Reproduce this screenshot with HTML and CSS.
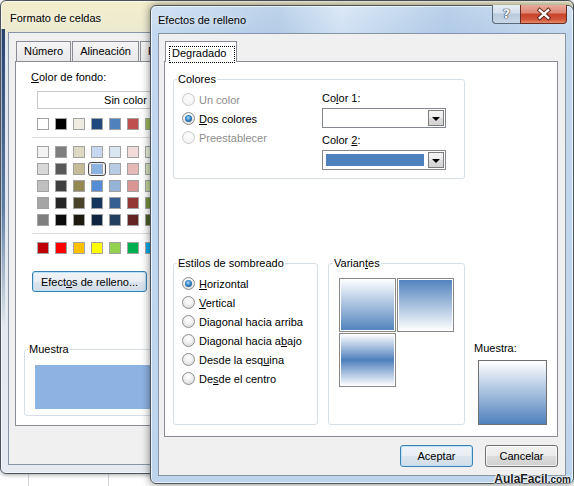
FILE: index.html
```html
<!DOCTYPE html>
<html lang="es">
<head>
<meta charset="utf-8">
<title>Efectos de relleno</title>
<link rel="stylesheet" href="styles.css">
</head>
<body>
<section class="win win-back">
  <header class="titlebar"><span class="title">Formato de celdas</span></header>
  <div class="client">
    <div class="tabstrip">
      <span class="tab">Número</span>
      <span class="tab">Alineación</span>
      <span class="tab tab-hidden">F</span>
    </div>
    <div class="panel panel-back">
      <div class="bg-label"><u>C</u>olor de fondo:</div>
      <div class="nocolor">Sin color</div>
      <div class="swatches">
        <span class="sw" style="background:#FFFFFF"></span><span class="sw" style="background:#000000"></span><span class="sw" style="background:#EEECE1"></span><span class="sw" style="background:#1F497D"></span><span class="sw" style="background:#4F81BD"></span><span class="sw" style="background:#C0504D"></span><span class="sw" style="background:#9BBB59"></span><span class="sw" style="background:#8064A2"></span><span class="sw" style="background:#4BACC6"></span><span class="sw" style="background:#F79646"></span>
      </div>
      <div class="sep"></div>
      <div class="swatches tints">
        <span class="sw" style="background:#F2F2F2"></span><span class="sw" style="background:#7F7F7F"></span><span class="sw" style="background:#DDD9C3"></span><span class="sw" style="background:#C6D9F0"></span><span class="sw" style="background:#DBE5F1"></span><span class="sw" style="background:#F2DCDB"></span><span class="sw" style="background:#EBF1DD"></span><span class="sw" style="background:#E5E0EC"></span><span class="sw" style="background:#DBEEF3"></span><span class="sw" style="background:#FDEADA"></span>
        <span class="sw" style="background:#D8D8D8"></span><span class="sw" style="background:#595959"></span><span class="sw" style="background:#C4BD97"></span><span class="sw sw-sel" style="background:#8DB3E2"></span><span class="sw" style="background:#B8CCE4"></span><span class="sw" style="background:#E5B9B7"></span><span class="sw" style="background:#D7E3BC"></span><span class="sw" style="background:#CCC1D9"></span><span class="sw" style="background:#B7DDE8"></span><span class="sw" style="background:#FBD5B5"></span>
        <span class="sw" style="background:#BFBFBF"></span><span class="sw" style="background:#3F3F3F"></span><span class="sw" style="background:#938953"></span><span class="sw" style="background:#548DD4"></span><span class="sw" style="background:#95B3D7"></span><span class="sw" style="background:#D99694"></span><span class="sw" style="background:#C3D69B"></span><span class="sw" style="background:#B2A2C7"></span><span class="sw" style="background:#92CDDC"></span><span class="sw" style="background:#FAC08F"></span>
        <span class="sw" style="background:#A5A5A5"></span><span class="sw" style="background:#262626"></span><span class="sw" style="background:#494429"></span><span class="sw" style="background:#17365D"></span><span class="sw" style="background:#366092"></span><span class="sw" style="background:#953734"></span><span class="sw" style="background:#76923C"></span><span class="sw" style="background:#5F497A"></span><span class="sw" style="background:#31859B"></span><span class="sw" style="background:#E36C09"></span>
        <span class="sw" style="background:#7F7F7F"></span><span class="sw" style="background:#0C0C0C"></span><span class="sw" style="background:#1D1B10"></span><span class="sw" style="background:#0F243E"></span><span class="sw" style="background:#244061"></span><span class="sw" style="background:#632423"></span><span class="sw" style="background:#4F6128"></span><span class="sw" style="background:#3F3151"></span><span class="sw" style="background:#205867"></span><span class="sw" style="background:#974806"></span>
      </div>
      <div class="sep"></div>
      <div class="swatches">
        <span class="sw" style="background:#C00000"></span><span class="sw" style="background:#FF0000"></span><span class="sw" style="background:#FFC000"></span><span class="sw" style="background:#FFFF00"></span><span class="sw" style="background:#92D050"></span><span class="sw" style="background:#00B050"></span><span class="sw" style="background:#00B0F0"></span><span class="sw" style="background:#0070C0"></span><span class="sw" style="background:#002060"></span><span class="sw" style="background:#7030A0"></span>
      </div>
      <button class="btn btn-default btn-effects">Efect<u>o</u>s de relleno...</button>
      <fieldset class="group sample-group">
        <legend>Muestra</legend>
        <div class="sample-fill"></div>
      </fieldset>
    </div>
  </div>
</section>

<section class="win win-front">
  <header class="titlebar">
    <span class="title">Efectos de relleno</span>
    <div class="controls">
      <span class="cbtn cbtn-help">?</span>
      <span class="cbtn cbtn-close">
        <svg width="47" height="18" viewBox="0 0 47 18">
          <path d="M19.5 5 L28.5 13 M28.5 5 L19.5 13" stroke="#5b1a10" stroke-width="4.2" stroke-linecap="square" fill="none"/>
          <path d="M19.5 5 L28.5 13 M28.5 5 L19.5 13" stroke="#ffffff" stroke-width="2.4" stroke-linecap="square" fill="none"/>
        </svg>
      </span>
    </div>
  </header>
  <div class="client">
    <div class="tabstrip tabstrip-front">
      <span class="tab tab-sel">Degradado</span>
    </div>
    <div class="panel panel-front">
      <fieldset class="group colores">
        <legend>Colores</legend>
        <div class="colores-body">
          <div class="radios">
            <div class="opt off"><span class="radio"></span>Un color</div>
            <div class="opt"><span class="radio on"></span><span><u>D</u>os colores</span></div>
            <div class="opt off"><span class="radio"></span>Preestablecer</div>
          </div>
          <div class="colorpick">
            <div class="cl">Co<u>l</u>or 1:</div>
            <div class="combo"><span class="combo-val"></span><span class="drop"></span></div>
            <div class="cl cl2">Color <u>2</u>:</div>
            <div class="combo"><span class="combo-val blue"></span><span class="drop"></span></div>
          </div>
        </div>
      </fieldset>

      <div class="lower">
        <fieldset class="group estilos">
          <legend>Estilos de sombreado</legend>
          <div class="opt"><span class="radio on"></span><span><u>H</u>orizontal</span></div>
          <div class="opt"><span class="radio"></span><span><u>V</u>ertical</span></div>
          <div class="opt"><span class="radio"></span><span>Dia<u>g</u>onal hacia arriba</span></div>
          <div class="opt"><span class="radio"></span><span>Diagonal hacia a<u>b</u>ajo</span></div>
          <div class="opt"><span class="radio"></span><span>Desde la esq<u>u</u>ina</span></div>
          <div class="opt"><span class="radio"></span><span>De<u>s</u>de el centro</span></div>
        </fieldset>
        <fieldset class="group variantes">
          <legend>Varian<u>t</u>es</legend>
          <div class="tiles">
            <span class="tile tile-down"></span>
            <span class="tile tile-up"></span>
            <span class="tile tile-mid"></span>
          </div>
        </fieldset>
        <div class="muestra">
          <div class="muestra-label">Muestra:</div>
          <div class="muestra-box"></div>
        </div>
      </div>
    </div>
    <div class="actions">
      <button class="btn btn-default">Aceptar</button>
      <button class="btn">Cancelar</button>
    </div>
  </div>
</section>

<div class="watermark">AulaFacil<span class="dotcom">.com</span></div>
</body>
</html>
```

FILE: styles.css
```css
* { box-sizing: border-box; }
html, body { margin: 0; padding: 0; }

body {
  width: 574px;
  height: 486px;
  overflow: hidden;
  position: relative;
  font-family: "Liberation Sans", Arial, sans-serif;
  font-size: 11px;
  line-height: 14px;
  color: #000;
  background:
    linear-gradient(to right, transparent 28px, #d4d8de 28px, #d4d8de 29px, transparent 29px),
    linear-gradient(to right, transparent 108px, #d4d8de 108px, #d4d8de 109px, transparent 109px),
    #ffffff;
}

u { text-decoration: underline; text-underline-offset: 1px; }

/* ---------- windows ---------- */
.win {
  position: absolute;
  display: flex;
  flex-direction: column;
  border: 1px solid #4b535d;
}

.win-back {
  left: 0;
  top: 0;
  width: 574px;
  height: 474px;
  border-radius: 6px;
  padding: 0 7px 8px;
  background:
    linear-gradient(to bottom, rgba(20, 48, 96, 0.9) 0, rgba(40, 80, 130, 0.7) 60%, rgba(220, 228, 238, 0) 100%) 0 28px / 4px 300px no-repeat,
    linear-gradient(to bottom, #f3efcc 0, #ecead0 28px, #e2e8ee 40px, #e6ebf1 100%);
  box-shadow: inset 0 0 0 1px rgba(255, 255, 255, 0.55), 0 1px 4px rgba(0, 0, 0, 0.35);
}

.win-front {
  left: 150px;
  top: 5px;
  width: 424px;
  height: 479px;
  border-radius: 6px;
  padding: 0 7px 7px;
  background:
    linear-gradient(to right, rgba(255,255,255,0) 0, rgba(150,180,215,0.35) 30%, rgba(255,255,255,0.2) 45%, rgba(140,175,215,0.35) 70%, rgba(255,255,255,0) 100%) 0 0 / 100% 28px no-repeat,
    linear-gradient(to bottom, #d3e3f4 0, #c3d8ef 28px, #bdd4ec 100%);
  box-shadow: inset 0 0 0 1px rgba(255, 255, 255, 0.7), 0 0 9px rgba(0, 0, 0, 0.5);
}

.titlebar {
  display: flex;
  align-items: center;
  flex: none;
}

.win-back .titlebar {
  height: 31px;
  padding: 3px 0 0 2px;
}

.win-front .titlebar {
  height: 27px;
  justify-content: space-between;
}

.title {
  font-size: 11px;
  color: #000;
  text-shadow: 0 0 6px rgba(255, 255, 255, 0.9);
}

.controls {
  display: flex;
  align-self: flex-start;
  margin-top: -1px;
  margin-right: -1px;
}

.cbtn {
  height: 19px;
  display: flex;
  align-items: center;
  justify-content: center;
  border: 1px solid #5c6b7c;
  border-top: none;
}

.cbtn-help {
  width: 28px;
  border-radius: 0 0 0 4px;
  border-right: none;
  background: linear-gradient(to bottom, #e6edf5 0, #d3dfec 45%, #b9cadd 50%, #c8d7e7 100%);
  font-family: "DejaVu Sans", sans-serif;
  font-weight: bold;
  font-size: 13px;
  color: #f6f8fb;
  text-shadow: 0 0 1px #2b3846, 0 0 1px #2b3846, 0 0 1px #2b3846;
}

.cbtn-close {
  width: 47px;
  border-radius: 0 0 4px 0;
  border-color: #6a2b20;
  background: linear-gradient(to bottom, #e9a99a 0, #dc8672 45%, #c7422a 50%, #d0563c 80%, #e58a6c 100%);
}

.client {
  flex: 1;
  display: flex;
  flex-direction: column;
  background: #f0f0f0;
  border: 1px solid #8595a6;
}

/* ---------- tabs ---------- */
.tabstrip {
  display: flex;
  height: 20px;
  margin: 8px 0 0 7px;
}

.tab {
  height: 20px;
  padding: 0 7px;
  line-height: 18px;
  border: 1px solid #898c95;
  border-bottom: none;
  margin-right: 1px;
  background: linear-gradient(to bottom, #f4f4f4, #e9e9e9);
  white-space: nowrap;
}

.tab-hidden { width: 40px; }

.tabstrip-front {
  margin: 7px 0 0 6px;
}

.tab-sel {
  position: relative;
  z-index: 1;
  width: 72px;
  height: 21px;
  padding: 4px 0 0 6px;
  line-height: 14px;
  background: #fff;
}

.tab-sel::after {
  content: "";
  position: absolute;
  left: 3px;
  top: 4px;
  width: 64px;
  height: 15px;
  border: 1px dotted #000;
}

.panel {
  background: #fff;
  border: 1px solid #898c95;
  display: flex;
  flex-direction: column;
  align-items: flex-start;
}

/* ---------- back window panel ---------- */
.panel-back {
  margin-left: 6px;
  height: 365px;
  width: 560px;
}

.bg-label {
  margin: 8px 0 0 15px;
}

.nocolor {
  margin: 7px 0 0 21px;
  width: 173px;
  height: 18px;
  line-height: 16px;
  text-align: center;
  border: 1px solid #c6c6c6;
  padding-left: 4px;
}

.swatches {
  display: grid;
  grid-template-columns: repeat(10, 12px);
  column-gap: 6px;
  margin: 9px 0 0 21px;
}

.tints {
  row-gap: 5px;
  margin-top: 8px;
}

.sep + .swatches:not(.tints) { margin-top: 8px; }

.sw {
  position: relative;
  width: 12px;
  height: 12px;
  border: 1px solid #a2a2a2;
}

.sw-sel::after {
  content: "";
  position: absolute;
  left: -4px;
  top: -2px;
  right: -4px;
  bottom: -2px;
  border: 1px solid #4a4a4a;
  border-radius: 3px;
  box-shadow: inset 0 0 0 1px #e8e8e8;
}

.sep {
  margin: 7px 0 0 16px;
  width: 500px;
  height: 1px;
  background: #d9d9d9;
}

.btn {
  font: inherit;
  color: #000;
  height: 22px;
  width: 73px;
  padding: 0;
  border: 1px solid #707070;
  border-radius: 3px;
  background: linear-gradient(to bottom, #f2f2f2 0, #ebebeb 50%, #dddddd 51%, #cfcfcf 100%);
  box-shadow: inset 0 0 0 1px rgba(255, 255, 255, 0.7);
}

.btn-default {
  border-color: #3c7fb1;
  background: linear-gradient(to bottom, #f0f4f8 0, #e8eef4 50%, #dce5ee 51%, #d2dde8 100%);
  box-shadow: inset 0 0 0 1px #b9e3fa;
}

.btn-effects {
  width: 115px;
  height: 21px;
  margin: 17px 0 0 16px;
}

.group {
  margin: 0;
  min-width: 0;
  border: 1px solid #d5dfe5;
  border-radius: 3px;
}

.group legend {
  padding: 0 1px;
  line-height: 14px;
}

.sample-group {
  margin: 50px 0 0 8px;
  width: 400px;
  padding: 9px 0 6px 10px;
}

.sample-group legend { margin-left: -7px; }

.sample-fill {
  height: 44px;
  background: #8db3e2;
}

/* ---------- front window panel ---------- */
.panel-front {
  margin-left: 5px;
  width: 394px;
  height: 376px;
}

.colores {
  margin: 10px 0 0 8px;
  width: 292px;
  padding: 4px 8px 8px;
}

.colores legend { margin-left: -5px; }

.colores-body {
  display: grid;
  grid-template-columns: 140px 124px;
}

.opt {
  display: flex;
  align-items: center;
  height: 19px;
  white-space: nowrap;
}

.opt.off { color: #8d8d8d; }

.radio {
  position: relative;
  flex: none;
  width: 13px;
  height: 13px;
  margin-right: 4px;
  border-radius: 50%;
  border: 1px solid #8e8f8f;
  background: radial-gradient(circle at 50% 35%, #ffffff 0, #f2f2f2 40%, #d2d2d2 100%);
}

.opt.off .radio {
  border-color: #c9c9c9;
  background: radial-gradient(circle at 50% 35%, #fcfcfc 0, #f1f1f1 100%);
}

.radio.on::after {
  content: "";
  position: absolute;
  left: 2px;
  top: 2px;
  width: 7px;
  height: 7px;
  border-radius: 50%;
  background: radial-gradient(circle at 45% 40%, #a8dcf8 0, #3584c4 45%, #0f3d6d 100%);
}

.cl {
  line-height: 17px;
}

.cl2 { margin-top: 4px; }

.combo {
  display: flex;
  align-items: center;
  width: 124px;
  height: 20px;
  margin-top: 1px;
  padding: 1px 1px 1px 3px;
  border: 1px solid #82868e;
  background: #fff;
}

.combo-val {
  flex: 1;
  height: 12px;
  margin-right: 4px;
}

.combo-val.blue { background: #4f81bd; }

.drop {
  display: flex;
  align-items: center;
  justify-content: center;
  width: 16px;
  height: 16px;
  border: 1px solid #7c7c7c;
  background: linear-gradient(to bottom, #f4f4f4 0, #ececec 50%, #dedede 51%, #d2d2d2 100%);
}

.drop::before {
  content: "";
  border-left: 4px solid transparent;
  border-right: 4px solid transparent;
  border-top: 4px solid #000;
  margin-top: 1px;
}

.lower {
  display: flex;
  align-items: stretch;
  margin: 77px 0 0 8px;
}

.estilos {
  width: 145px;
  padding: 4px 8px 5px;
}

.estilos legend { margin-left: -5px; }

.variantes {
  width: 137px;
  margin-left: 10px;
  padding: 8px 0 6px 10px;
}

.variantes legend { margin-left: -6px; }

.tiles {
  display: grid;
  grid-template-columns: 57px 57px;
  grid-template-rows: 54px 54px;
  gap: 1px;
}

.tile {
  border: 1px solid #878787;
  box-shadow: inset 0 0 0 1px #fff;
}

.tile-down { background: linear-gradient(to bottom, #ffffff 0, #4f81bd 100%); }
.tile-up { background: linear-gradient(to bottom, #4f81bd 0, #ffffff 100%); }
.tile-mid { background: linear-gradient(to bottom, #ffffff 0, #4f81bd 50%, #ffffff 100%); }

.muestra {
  align-self: flex-start;
  margin: 85px 0 0 9px;
}

.muestra-box {
  width: 69px;
  height: 65px;
  margin: 5px 0 0 4px;
  border: 1px solid #707070;
  background: linear-gradient(to bottom, #ffffff 0, #4f81bd 100%);
}

.actions {
  display: flex;
  justify-content: flex-end;
  gap: 12px;
  margin-top: 8px;
  padding-right: 7px;
}

/* ---------- watermark ---------- */
.watermark {
  position: absolute;
  right: 3px;
  top: 472px;
  font-family: "Liberation Sans", Arial, sans-serif;
  font-weight: bold;
  font-size: 12px;
  line-height: 14px;
  color: #1c1c1c;
  text-shadow: 0 0 2px #fff, 0 0 2px #fff, 0 0 3px #fff;
  white-space: nowrap;
}

.dotcom { font-size: 10px; }
```
